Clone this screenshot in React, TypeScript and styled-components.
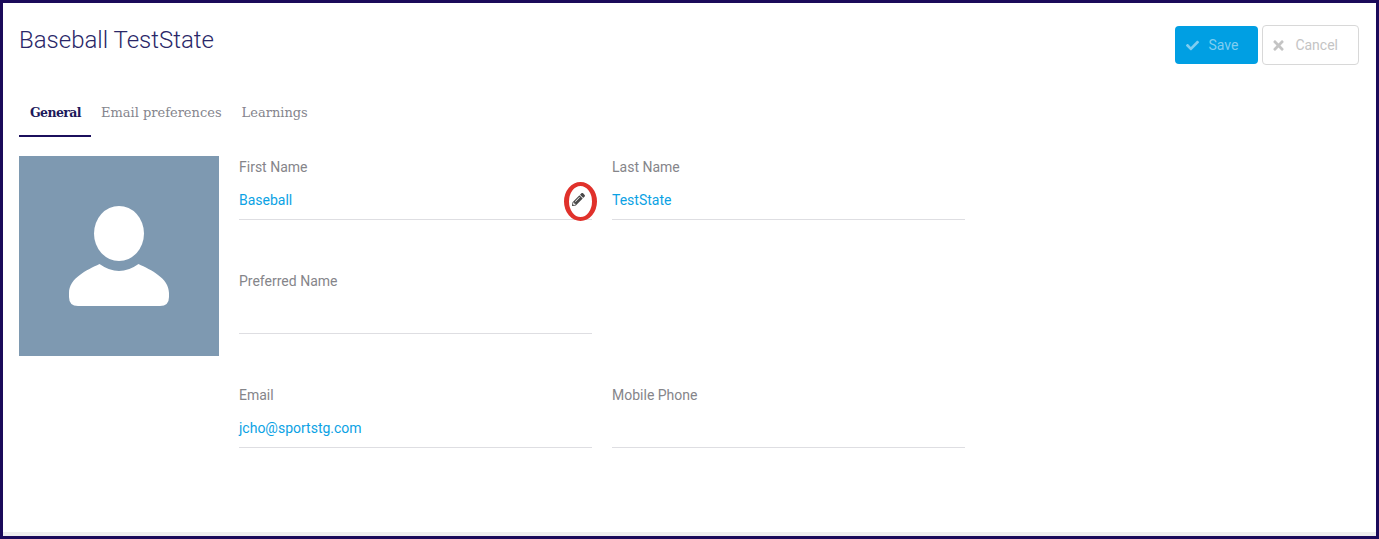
import React from 'react';
import styled, { createGlobalStyle } from 'styled-components';
import { FaCheck, FaPencilAlt, FaTimes } from 'react-icons/fa';

const GlobalStyle = createGlobalStyle`
  html, body {
    margin: 0;
    padding: 0;
    background: #fff;
  }
  * {
    box-sizing: border-box;
  }
`;

const Frame = styled.div`
  width: 1379px;
  height: 539px;
  border: 3px solid #1b0a5a;
  background: #fff;
  font-family: Roboto, 'Liberation Sans', sans-serif;
  display: flex;
  flex-direction: column;
  overflow: hidden;
`;

const Page = styled.div`
  flex: 1;
  padding: 0 17px 0 16px;
`;

const BottomStrip = styled.div`
  height: 4px;
  background: #eeeeef;
`;

const Header = styled.div`
  display: flex;
  justify-content: space-between;
  align-items: flex-start;
  height: 85px;
  padding-top: 22px;
`;

const Title = styled.h1`
  margin: 0;
  font-size: 24px;
  font-weight: 300;
  line-height: 30px;
  color: #2a2768;
`;

const Actions = styled.div`
  display: flex;
  align-items: center;
  gap: 4px;
`;

const ActionButton = styled.button<{ $primary?: boolean }>`
  display: flex;
  align-items: center;
  gap: 9px;
  height: ${(p) => (p.$primary ? '38px' : '40px')};
  padding: 0 20px 0 ${(p) => (p.$primary ? '11px' : '8px')};
  border: ${(p) => (p.$primary ? 'none' : '1px solid #d8d8d8')};
  border-radius: 4px;
  background: ${(p) => (p.$primary ? '#009fe3' : '#fff')};
  color: ${(p) => (p.$primary ? '#7fcdf0' : '#c4c4c4')};
  font-family: inherit;
  font-size: 14px;

  & > svg {
    width: ${(p) => (p.$primary ? '13px' : '15px')};
    height: ${(p) => (p.$primary ? '13px' : '15px')};
  }
`;

const Tabs = styled.div`
  display: flex;
  height: 49px;
`;

const Tab = styled.div<{ $active?: boolean }>`
  height: 49px;
  padding: 15px 10px 0 ${(p) => (p.$active ? '11px' : '10px')};
  font-family: 'DejaVu Serif', 'Liberation Serif', serif;
  font-size: ${(p) => (p.$active ? '12.5px' : '13px')};
  font-weight: ${(p) => (p.$active ? 700 : 400)};
  letter-spacing: ${(p) => (p.$active ? '-0.6px' : '0')};
  line-height: 20px;
  color: ${(p) => (p.$active ? '#1d1a5b' : '#85858d')};
  border-bottom: 2px solid ${(p) => (p.$active ? '#1b0f5c' : 'transparent')};
`;

const Body = styled.div`
  display: flex;
  gap: 20px;
  margin-top: 19px;
`;

const Avatar = styled.div`
  width: 200px;
  height: 200px;
  flex: none;
  background: #7e99b1;
`;

const AvatarSvg = styled.svg`
  display: block;
  width: 200px;
  height: 200px;
`;

const FieldGrid = styled.div`
  display: grid;
  grid-template-columns: 353px 353px;
  grid-auto-rows: 64px;
  column-gap: 20px;
  row-gap: 50px;
`;

const Field = styled.div`
  position: relative;
  height: 64px;
  border-bottom: 1px solid #dedee2;
`;

const Label = styled.div`
  height: 22px;
  font-size: 14px;
  line-height: 22px;
  color: #85858a;
`;

const Value = styled.div`
  margin-top: 11px;
  height: 22px;
  font-size: 14px;
  line-height: 22px;
  color: #0ba2e4;
`;

const EditHighlight = styled.div`
  position: absolute;
  left: 325px;
  top: 26px;
  width: 33px;
  height: 39px;
  border-style: solid;
  border-color: #e0312b;
  border-width: 4px 5px;
  border-radius: 50%;
  display: flex;
  align-items: center;
  justify-content: center;
  color: #4a4a4a;
  padding-right: 4px;
  padding-bottom: 4px;

  & > svg {
    flex: none;
    width: 13px;
    height: 13px;
  }
`;

const App = () => {
  return (
    <>
      <GlobalStyle />
      <Frame>
        <Page>
          <Header>
            <Title>Baseball TestState</Title>
            <Actions>
              <ActionButton $primary>
                <FaCheck />
                Save
              </ActionButton>
              <ActionButton>
                <FaTimes />
                Cancel
              </ActionButton>
            </Actions>
          </Header>
          <Tabs>
            <Tab $active>General</Tab>
            <Tab>Email preferences</Tab>
            <Tab>Learnings</Tab>
          </Tabs>
          <Body>
            <Avatar>
              <AvatarSvg viewBox="0 0 200 200">
                <ellipse cx="100" cy="77.5" rx="25" ry="27.5" fill="#fff" />
                <path
                  fill="#fff"
                  d="M80.5 108 Q100 122 119.5 108 C132 114 150 122 150 137 V141 Q150 150 141 150 H59 Q50 150 50 141 V137 C50 122 68 114 80.5 108 Z"
                />
              </AvatarSvg>
            </Avatar>
            <FieldGrid>
              <Field>
                <Label>First Name</Label>
                <Value>Baseball</Value>
                <EditHighlight>
                  <FaPencilAlt />
                </EditHighlight>
              </Field>
              <Field>
                <Label>Last Name</Label>
                <Value>TestState</Value>
              </Field>
              <Field>
                <Label>Preferred Name</Label>
              </Field>
              <div />
              <Field>
                <Label>Email</Label>
                <Value>jcho@sportstg.com</Value>
              </Field>
              <Field>
                <Label>Mobile Phone</Label>
              </Field>
            </FieldGrid>
          </Body>
        </Page>
        <BottomStrip />
      </Frame>
    </>
  );
};

export default App;
